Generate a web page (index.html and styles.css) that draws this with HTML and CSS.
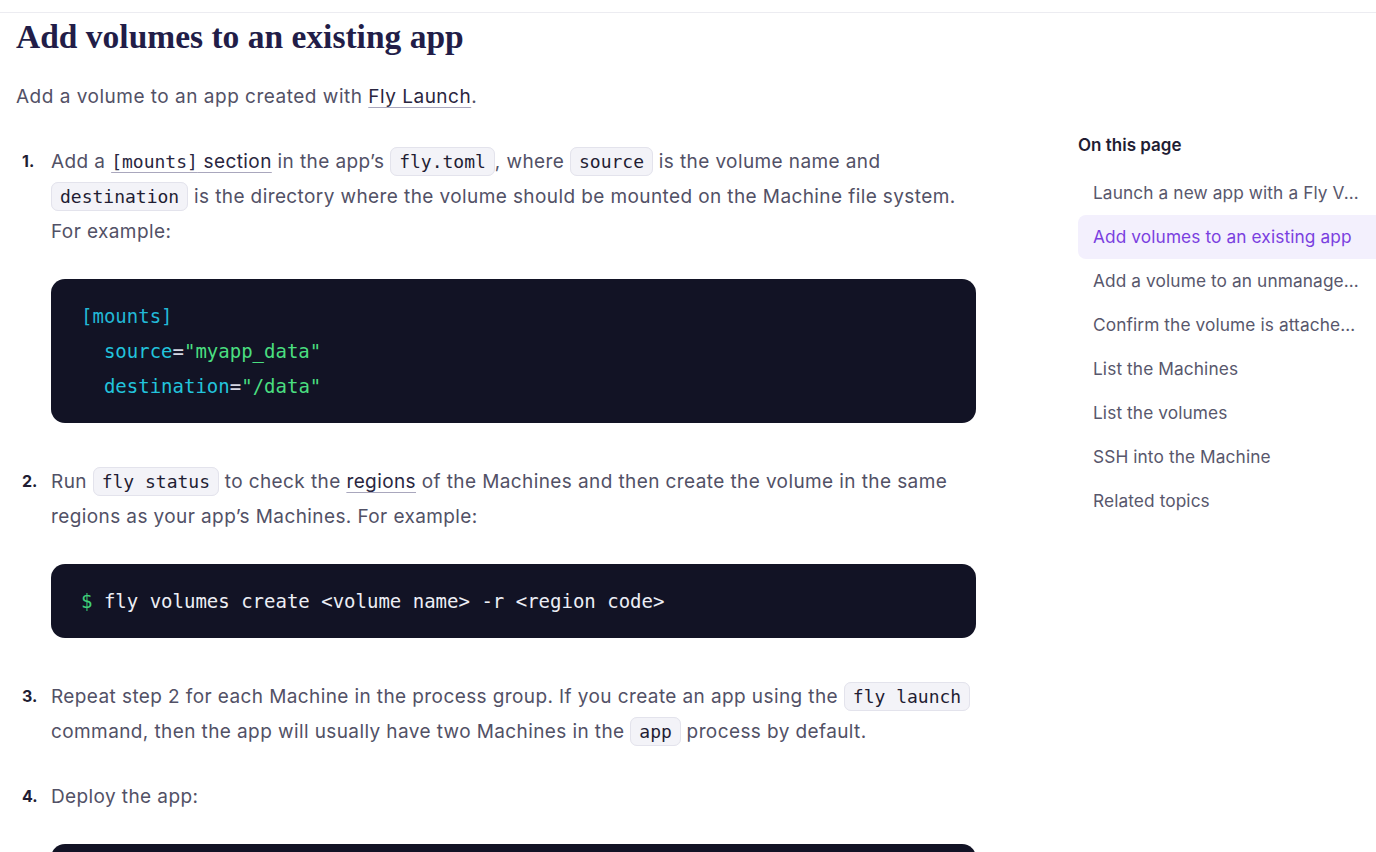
FILE: index.html
```html
<!DOCTYPE html>
<html lang="en">
<head>
<meta charset="utf-8">
<title>Add volumes to an existing app</title>
<link rel="stylesheet" href="styles.css">
</head>
<body>
<div class="topbar"></div>
<div class="page">
  <main class="content">
    <h2 class="title">Add volumes to an existing app</h2>
    <p class="lead">Add a volume to an app created with <a href="#" class="link">Fly Launch</a>.</p>
    <ol class="steps">
      <li class="step">
        <div class="step-body">
          <p class="para">Add a <a href="#" class="link"><span class="mono">[mounts]</span> section</a> in the app’s <code class="chip">fly.toml</code>, where <code class="chip">source</code> is the volume name and <code class="chip">destination</code> is the directory where the volume should be mounted on the Machine file system. For example:</p>
          <pre class="codeblock"><span class="c-sec">[mounts]</span>
  <span class="c-key">source</span><span class="c-eq">=</span><span class="c-str">"myapp_data"</span>
  <span class="c-key">destination</span><span class="c-eq">=</span><span class="c-str">"/data"</span></pre>
        </div>
      </li>
      <li class="step">
        <div class="step-body">
          <p class="para">Run <code class="chip">fly status</code> to check the <a href="#" class="link">regions</a> of the Machines and then create the volume in the same regions as your app’s Machines. For example:</p>
          <pre class="codeblock"><span class="c-prompt">$</span> fly volumes create &lt;volume name&gt; -r &lt;region code&gt;</pre>
        </div>
      </li>
      <li class="step">
        <div class="step-body">
          <p class="para">Repeat step 2 for each Machine in the process group. If you create an app using the <code class="chip">fly launch</code> command, then the app will usually have two Machines in the <code class="chip">app</code> process by default.</p>
        </div>
      </li>
      <li class="step">
        <div class="step-body">
          <p class="para">Deploy the app:</p>
          <pre class="codeblock"><span class="c-prompt">$</span> fly deploy</pre>
        </div>
      </li>
    </ol>
  </main>
  <aside class="toc">
    <h3 class="toc-title">On this page</h3>
    <ul class="toc-list">
      <li><a href="#" class="toc-item">Launch a new app with a Fly Volume</a></li>
      <li><a href="#" class="toc-item active">Add volumes to an existing app</a></li>
      <li><a href="#" class="toc-item">Add a volume to an unmanaged Machine</a></li>
      <li><a href="#" class="toc-item">Confirm the volume is attached to a Machine</a></li>
      <li><a href="#" class="toc-item">List the Machines</a></li>
      <li><a href="#" class="toc-item">List the volumes</a></li>
      <li><a href="#" class="toc-item">SSH into the Machine</a></li>
      <li><a href="#" class="toc-item">Related topics</a></li>
    </ul>
  </aside>
</div>
</body>
</html>
```

FILE: styles.css
```css
* { box-sizing: border-box; }
html, body { margin: 0; padding: 0; background: #ffffff; overflow: hidden; }
body {
  font-family: Inter, "Noto Sans", sans-serif;
  color: #525166;
  height: 852px;
}
.topbar {
  height: 13px;
  border-bottom: 1px solid #ececf1;
}
.page {
  display: flex;
  align-items: flex-start;
}
.content {
  width: 976px;
  padding-left: 16px;
  flex: none;
}
.title {
  font-family: "Liberation Serif", "DejaVu Serif", serif;
  font-weight: 700;
  font-size: 33.5px;
  line-height: 40px;
  color: #221d48;
  margin: 4px 0 22px 0;
}
.lead {
  font-size: 19px;
  letter-spacing: 0.5px;
  line-height: 35px;
  margin: 0 0 30px 0;
}
.link {
  color: #2a2640;
  text-decoration: underline;
  text-decoration-color: #a9a7bd;
  text-decoration-thickness: 1px;
  text-underline-offset: 4px;
}
.mono {
  font-family: "DejaVu Sans Mono", "Liberation Mono", monospace;
  font-size: 18px;
  letter-spacing: 0;
}
.steps {
  list-style: none;
  margin: 0;
  padding: 0;
  counter-reset: step;
}
.step {
  counter-increment: step;
  display: grid;
  grid-template-columns: 35px 1fr;
  margin-bottom: 30px;
}
.step::before {
  content: counter(step) ".";
  font-weight: 700;
  font-size: 16px;
  line-height: 35px;
  color: #1f1d33;
  padding-left: 6px;
}
.step-body {
  display: flex;
  flex-direction: column;
  gap: 30px;
}
.para {
  margin: 0;
  font-size: 19px;
  letter-spacing: 0.4px;
  line-height: 35px;
}
.chip {
  font-family: "DejaVu Sans Mono", "Liberation Mono", monospace;
  font-size: 18px;
  letter-spacing: 0;
  white-space: nowrap;
  color: #1f1d33;
  background: #f3f3f8;
  border: 1px solid #e3e3ec;
  border-radius: 7px;
  padding: 3px 8px;
}
.codeblock {
  margin: 0 0 11px 0;
  background: #121325;
  border-radius: 14px;
  padding: 20px 30px 19px 30px;
  font-family: "DejaVu Sans Mono", "Liberation Mono", monospace;
  font-size: 19px;
  line-height: 35px;
  color: #eceef5;
  white-space: pre;
  overflow: hidden;
}
.c-sec { color: #22b8d6; }
.c-key { color: #22c3dc; }
.c-eq { color: #d4d6e2; }
.c-str { color: #4ade80; }
.c-prompt { color: #3fd07a; }

.toc {
  margin-left: 102px;
  margin-top: 120px;
  width: 298px;
  flex: none;
}
.toc-title {
  margin: 0 0 14px 0;
  font-size: 17px;
  line-height: 24px;
  font-weight: 600;
  color: #1f1d33;
}
.toc-list {
  list-style: none;
  margin: 0;
  padding: 0;
}
.toc-item {
  display: block;
  height: 44px;
  line-height: 44px;
  padding: 0 11px 0 15px;
  font-size: 17.3px;
  letter-spacing: 0.1px;
  color: #58576c;
  text-decoration: none;
  white-space: nowrap;
  overflow: hidden;
  text-overflow: ellipsis;
  border-radius: 8px 0 0 8px;
}
.toc-item.active {
  background: #f3f0fd;
  color: #7a3fe0;
}
```
